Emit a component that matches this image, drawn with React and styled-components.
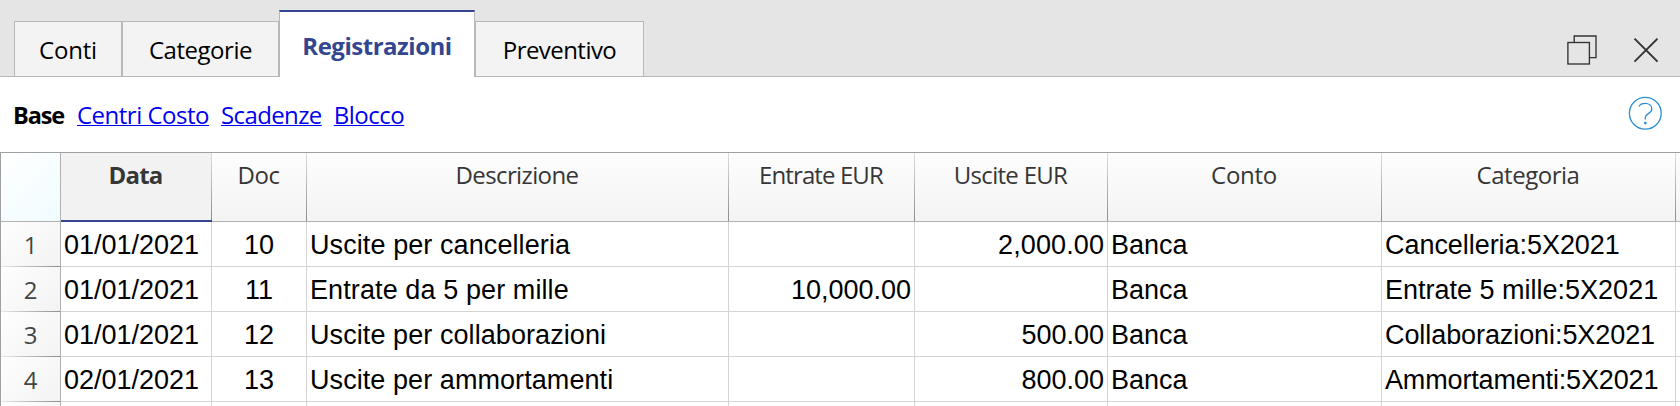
import React from "react";
import styled, { createGlobalStyle, css } from "styled-components";

const GlobalStyle = createGlobalStyle`
  body { margin: 0; background: #fff; overflow: hidden; }
  *, *::before, *::after { box-sizing: border-box; }
`;

const Window = styled.div`
  width: 1680px;
  height: 406px;
  overflow: hidden;
  background: #fff;
  color: #000;
  font: 24px "Open Sans", "Noto Sans", sans-serif;
  white-space: nowrap;
`;

const Label = styled.span`
  letter-spacing: ${(p) => p.$spacing || 0}px;
`;

const TabBar = styled.header`
  display: flex;
  align-items: flex-end;
  height: 77px;
  padding-left: 14px;
  background: #e5e5e5;
  box-shadow: inset 0 -1px #b8b8b8;
`;

const Tab = styled.div`
  display: flex;
  align-items: center;
  justify-content: center;
  width: ${(p) => p.$width}px;
  height: 56px;
  border: 1px solid #b8b8b8;
  background: #f3f3f3;
  ${(p) =>
    p.$active &&
    css`
      height: 67px;
      padding-top: 1px;
      border-top: 2px solid #33468f;
      border-bottom: 0;
      background: #fff;
      color: #33468f;
      font-weight: 700;
    `}
`;

const WindowButtons = styled.div`
  display: flex;
  align-items: flex-start;
  gap: 36px;
  height: 77px;
  margin-left: auto;
  padding: 35px 22px 0 0;
`;

const ViewBar = styled.nav`
  display: flex;
  align-items: center;
  height: 75px;
  padding: 0 18px 0 13px;
`;

const CurrentView = styled.strong`
  width: 64px;
  font-size: 23.5px;
  letter-spacing: -1.1px;
`;

const ViewLink = styled.a`
  margin-right: 12px;
  color: #0000f0;
  letter-spacing: ${(p) => p.$spacing}px;
  text-decoration: underline;
  text-decoration-thickness: 1px;
  text-underline-offset: 1px;
  text-decoration-skip-ink: none;
`;

const HelpButton = styled.span`
  display: flex;
  margin-left: auto;
  margin-bottom: 3px;
`;

const Table = styled.div`
  border-top: 1px solid #a0a0a0;
`;

const Row = styled.div`
  display: grid;
  grid-template-columns: 61px 151px 95px 422px 186px 193px 274px 294px 5px;
`;

const Corner = styled.div`
  height: 69px;
  border: solid #b0b0b0;
  border-width: 0 1px 1px;
  border-left-color: #a0a0a0;
  background: linear-gradient(135deg, #fff, #f0fcff);
`;

const HeadCell = styled.div`
  height: 69px;
  padding-right: 2px;
  line-height: 43px;
  text-align: center;
  color: #363636;
  border-bottom: 1px solid #b0b0b0;
  background:
    linear-gradient(#dedede, #8c8c8c) right / 1px 100% no-repeat,
    linear-gradient(#fdfdfd, #f4f4f4);
  ${(p) =>
    p.$sorted &&
    css`
      font-weight: 700;
      border-bottom: 2px solid #33468f;
      background:
        linear-gradient(#dedede, #8c8c8c) right / 1px 100% no-repeat,
        #f2f2f2;
    `}
`;

const RowNumber = styled.div`
  height: 45px;
  line-height: 46px;
  text-align: center;
  color: #444;
  border: solid #b0b0b0;
  border-width: 0 1px;
  border-left-color: #a0a0a0;
  background:
    linear-gradient(90deg, #e8e8e8, #8c8c8c) bottom / 100% 1px no-repeat,
    linear-gradient(135deg, #fefefe, #f3f3f3);
`;

const Cell = styled.div`
  height: 45px;
  padding: 0 3px;
  overflow: hidden;
  font: 27px/46px "Liberation Sans", Arial, sans-serif;
  letter-spacing: ${(p) => p.$spacing || 0}px;
  text-align: ${(p) => p.$align || "left"};
  border: solid #d4d4d4;
  border-width: 0 1px 1px 0;
`;

const RestoreIcon = () => (
  <svg width="30" height="30" viewBox="0 0 30 30" fill="none" stroke="#333" strokeWidth="1.35">
    <path d="M7.2 8.2V1.2H29V22.8H22.2" transform="translate(0 -.2)" />
    <rect x=".9" y="7.7" width="21.5" height="21.5" transform="translate(0 -.2)" />
  </svg>
);

const CloseIcon = () => (
  <svg width="25" height="30" viewBox="0 0 25 30" fill="none" stroke="#333" strokeWidth="1.9">
    <path d="M1.5 3.7L24.5 26.7M24.5 3.7L1.5 26.7" />
  </svg>
);

const HelpIcon = () => (
  <svg width="34" height="34" viewBox="0 0 34 34" fill="none" stroke="#2b8fd0" strokeWidth="1.3">
    <circle cx="17.3" cy="17.3" r="15.9" />
    <path d="M11 10.5C12.2 8.2 14.3 7.4 17 7.4C21 7.4 23.8 9.6 23.8 12.9C23.8 18 17.3 17.2 17.3 21.5V23.5" />
    <circle cx="17.3" cy="27.1" r="1.4" fill="#2b8fd0" stroke="none" />
  </svg>
);

const tabs = [
  { label: "Conti", width: 108, spacing: -0.2 },
  { label: "Categorie", width: 157, spacing: -0.47 },
  { label: "Registrazioni", width: 196, spacing: -0.48, active: true },
  { label: "Preventivo", width: 169, spacing: -0.55 },
];

const columns = [
  { label: "Data", spacing: -0.75, sorted: true },
  { label: "Doc", spacing: -0.45, align: "center" },
  { label: "Descrizione", spacing: -0.62 },
  { label: "Entrate EUR", spacing: -0.9, align: "right" },
  { label: "Uscite EUR", spacing: -0.7, align: "right" },
  { label: "Conto", spacing: -0.3 },
  { label: "Categoria", spacing: -0.48 },
];

const rows = [
  ["01/01/2021", "10", "Uscite per cancelleria", "", "2,000.00", "Banca", "Cancelleria:5X2021"],
  ["01/01/2021", "11", "Entrate da 5 per mille", "10,000.00", "", "Banca", "Entrate 5 mille:5X2021"],
  ["01/01/2021", "12", "Uscite per collaborazioni", "", "500.00", "Banca", "Collaborazioni:5X2021"],
  ["02/01/2021", "13", "Uscite per ammortamenti", "", "800.00", "Banca", "Ammortamenti:5X2021"],
];

// Fine tracking for the longer strings.
const tracking = {
  "Uscite per cancelleria": 0.09,
  "Entrate da 5 per mille": 0.1,
  "Uscite per collaborazioni": 0.08,
  "Uscite per ammortamenti": 0.07,
  "2,000.00": 0.1,
  "Collaborazioni:5X2021": -0.08,
  "Cancelleria:5X2021": -0.05,
  "Ammortamenti:5X2021": -0.15,
};

export default function App() {
  return (
    <Window>
      <GlobalStyle />
      <TabBar>
        {tabs.map((t) => (
          <Tab key={t.label} $width={t.width} $active={t.active}>
            <Label $spacing={t.spacing}>{t.label}</Label>
          </Tab>
        ))}
        <WindowButtons>
          <RestoreIcon />
          <CloseIcon />
        </WindowButtons>
      </TabBar>
      <ViewBar>
        <CurrentView>Base</CurrentView>
        <ViewLink $spacing={-0.5}>Centri Costo</ViewLink>
        <ViewLink $spacing={-0.6}>Scadenze</ViewLink>
        <ViewLink $spacing={-0.5}>Blocco</ViewLink>
        <HelpButton>
          <HelpIcon />
        </HelpButton>
      </ViewBar>
      <Table>
        <Row>
          <Corner />
          {columns.map((c) => (
            <HeadCell key={c.label} $sorted={c.sorted}>
              <Label $spacing={c.spacing}>{c.label}</Label>
            </HeadCell>
          ))}
          <HeadCell />
        </Row>
        {rows.map((row, i) => (
          <Row key={i}>
            <RowNumber>{i + 1}</RowNumber>
            {row.map((text, j) => (
              <Cell key={j} $align={columns[j].align} $spacing={tracking[text]}>
                {text}
              </Cell>
            ))}
            <Cell />
          </Row>
        ))}
        <Row>
          <RowNumber />
          {columns.map((c) => (
            <Cell key={c.label} />
          ))}
          <Cell />
        </Row>
      </Table>
    </Window>
  );
}
